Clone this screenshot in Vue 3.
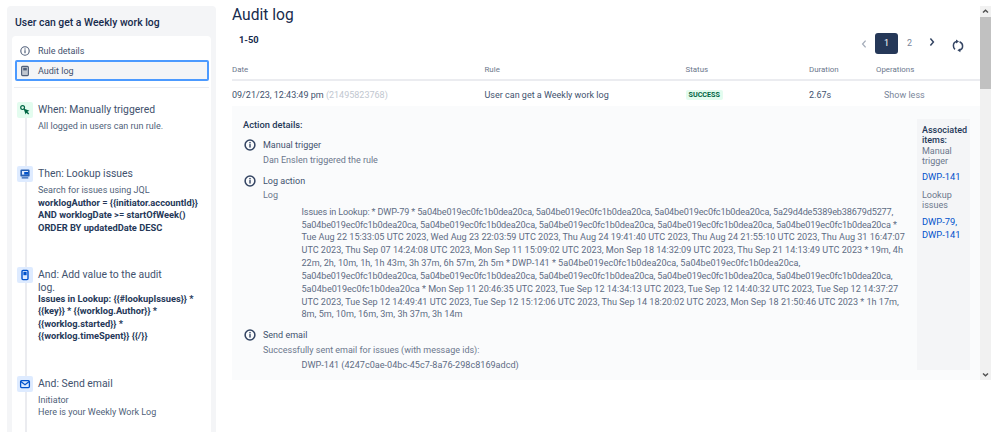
<script setup>
const hexId = '5a04be019ec0fc1b0dea20ca'
const logLines = [
  { text: `Issues in Lookup: * DWP-79 * ${hexId}, ${hexId}, ${hexId}, 5a29d4de5389eb38679d5277,`, kind: 'hex' },
  { text: `${hexId}, ${hexId}, ${hexId}, ${hexId}, ${hexId} *`, kind: 'hex' },
  { text: 'Tue Aug 22 15:33:05 UTC 2023, Wed Aug 23 22:03:59 UTC 2023, Thu Aug 24 19:41:40 UTC 2023, Thu Aug 24 21:55:10 UTC 2023, Thu Aug 31 16:47:07', kind: 'plain' },
  { text: 'UTC 2023, Thu Sep 07 14:24:08 UTC 2023, Mon Sep 11 15:09:02 UTC 2023, Mon Sep 18 14:32:09 UTC 2023, Thu Sep 21 14:13:49 UTC 2023 * 19m, 4h', kind: 'plain' },
  { text: `22m, 2h, 10m, 1h, 1h 43m, 3h 37m, 6h 57m, 2h 5m * DWP-141 * ${hexId}, ${hexId},`, kind: 'plain' },
  { text: `${hexId}, ${hexId}, ${hexId}, ${hexId}, ${hexId},`, kind: 'hex' },
  { text: `${hexId} * Mon Sep 11 20:46:35 UTC 2023, Tue Sep 12 14:34:13 UTC 2023, Tue Sep 12 14:40:32 UTC 2023, Tue Sep 12 14:37:27`, kind: 'plain' },
  { text: 'UTC 2023, Tue Sep 12 14:49:41 UTC 2023, Tue Sep 12 15:12:06 UTC 2023, Thu Sep 14 18:20:02 UTC 2023, Mon Sep 18 21:50:46 UTC 2023 * 1h 17m,', kind: 'plain' },
  { text: '8m, 5m, 10m, 16m, 3m, 3h 37m, 3h 14m', kind: 'plain' }
]
</script>

<template>
  <div class="page">
    <aside class="sidebar">
      <h2 class="rule-name">User can get a Weekly work log</h2>
      <div class="panel">
        <div class="nav-item">
          <svg class="nav-icon" viewBox="0 0 12 12"><circle cx="6" cy="6" r="4.2" fill="none" stroke="#505f79" stroke-width="1.1"/><rect x="5.4" y="5.2" width="1.2" height="3" fill="#505f79"/><rect x="5.4" y="3.4" width="1.2" height="1.2" fill="#505f79"/></svg>
          <span>Rule details</span>
        </div>
        <div class="nav-item active">
          <svg class="nav-icon" viewBox="0 0 12 12"><rect x="2.6" y="1.4" width="6.8" height="9.2" rx="1" fill="#c1c7d0" stroke="#505f79" stroke-width="1.1"/><rect x="4.2" y="2.8" width="3.6" height="2.6" fill="#505f79"/></svg>
          <span>Audit log</span>
        </div>
        <div class="divider"></div>

        <div class="steps">
          <div class="step step-when">
            <div class="step-icon green">
              <svg viewBox="0 0 16 16" width="16" height="16"><circle cx="5.6" cy="5.6" r="1.9" fill="none" stroke="#006644" stroke-width="1.2"/><path d="M6.6 6.6 L12.4 8.8 L10.4 9.8 L12.2 11.6 L11.2 12.6 L9.4 10.8 L8.6 12.6 Z" fill="#006644"/></svg>
            </div>
            <div class="step-title">When: Manually triggered</div>
            <div class="step-text">All logged in users can run rule.</div>
          </div>
          <div class="step step-then">
            <div class="step-icon blue">
              <svg viewBox="0 0 16 16" width="16" height="16"><rect x="3.4" y="3.6" width="9.2" height="7" rx="1.2" fill="#0747a6" opacity=".85"/><rect x="5" y="5" width="6" height="3.6" fill="#deebff"/><rect x="7.2" y="6" width="3.8" height="2.6" fill="#0052cc"/><rect x="4.6" y="11.2" width="6.8" height="1.4" rx=".5" fill="#0747a6" opacity=".85"/></svg>
            </div>
            <div class="step-title">Then: Lookup issues</div>
            <div class="step-text">Search for issues using JQL</div>
            <div class="step-text bold">worklogAuthor = {{ '{' }}{initiator.accountId}}</div>
            <div class="step-text bold">AND worklogDate &gt;= startOfWeek()</div>
            <div class="step-text bold">ORDER BY updatedDate DESC</div>
          </div>
          <div class="step step-add">
            <div class="step-icon blue">
              <svg viewBox="0 0 16 16" width="16" height="16"><rect x="5" y="3.4" width="6" height="9.2" rx="1" fill="#deebff" stroke="#0052cc" stroke-width="1.4"/><rect x="6.4" y="4.8" width="3.2" height="3.4" fill="#0052cc"/></svg>
            </div>
            <div class="step-title">And: Add value to the audit</div>
            <div class="step-title">log.</div>
            <div class="step-text bold">Issues in Lookup: {{ '{' }}{#lookupIssues}} *</div>
            <div class="step-text bold">{{ '{' }}{key}} * {{ '{' }}{worklog.Author}} *</div>
            <div class="step-text bold">{{ '{' }}{worklog.started}} *</div>
            <div class="step-text bold">{{ '{' }}{worklog.timeSpent}} {{ '{' }}{/}}</div>
          </div>
          <div class="step step-mail">
            <div class="step-icon blue">
              <svg viewBox="0 0 16 16" width="16" height="16"><rect x="3.6" y="4.6" width="8.8" height="7" rx="1" fill="#deebff" stroke="#0052cc" stroke-width="1.3"/><path d="M3.8 5.6 L8 8.8 L12.2 5.6" fill="none" stroke="#0052cc" stroke-width="1.3"/></svg>
            </div>
            <div class="step-title">And: Send email</div>
            <div class="step-text first">Initiator</div>
            <div class="step-text">Here is your Weekly Work Log</div>
          </div>
        </div>
      </div>
    </aside>

    <main class="main">
      <div class="content">
        <h1 class="title">Audit log</h1>
        <div class="toolbar">
          <strong class="range">1-50</strong>
          <div class="pager">
            <svg class="chev" viewBox="0 0 8 12"><path d="M5.6 2.6 L2.6 6 L5.6 9.4" fill="none" stroke="#a5adba" stroke-width="1.3"/></svg>
            <span class="page-btn current">1</span>
            <span class="page-btn">2</span>
            <svg class="chev next" viewBox="0 0 8 12"><path d="M2.4 2.6 L5.4 6 L2.4 9.4" fill="none" stroke="#344563" stroke-width="1.5"/></svg>
            <svg class="refresh" viewBox="0 0 14 14"><path d="M6 2.6 C3.4 2.8 2.4 4.6 2.4 6.8 C2.4 8.4 3 9.6 4 10.4" fill="none" stroke="#344563" stroke-width="1.5"/><path d="M5 .6 L8 2.6 L5 4.6Z" fill="#344563"/><path d="M8.6 2.8 C10.4 3.6 11.6 5 11.6 7 C11.6 9.2 10.6 10.8 8.4 11.2" fill="none" stroke="#344563" stroke-width="1.5"/><path d="M9.4 9.2 L6.4 11.2 L9.4 13.2Z" fill="#344563"/></svg>
          </div>
        </div>

        <div class="row head">
          <span class="c-date">Date</span>
          <span class="c-rule">Rule</span>
          <span class="c-status">Status</span>
          <span class="c-dur">Duration</span>
          <span class="c-ops">Operations</span>
        </div>
        <div class="row body">
          <span class="c-date">09/21/23, 12:43:49 pm <span class="muted">(21495823768)</span></span>
          <span class="c-rule">User can get a Weekly work log</span>
          <span class="c-status"><span class="lozenge">SUCCESS</span></span>
          <span class="c-dur">2.67s</span>
          <span class="c-ops less">Show less</span>
        </div>

        <div class="details">
          <div class="actions">
            <h3 class="details-title">Action details:</h3>
            <section class="action a1">
              <svg class="info" viewBox="0 0 12 12"><circle cx="6" cy="6" r="4.2" fill="none" stroke="#344563" stroke-width="1.3"/><rect x="5.4" y="5.2" width="1.2" height="3" fill="#344563"/><rect x="5.4" y="3.4" width="1.2" height="1.2" fill="#344563"/></svg>
              <div class="a-body">
                <div class="a-name">Manual trigger</div>
                <div class="a-sub">Dan Enslen triggered the rule</div>
              </div>
            </section>
            <section class="action a2">
              <svg class="info" viewBox="0 0 12 12"><circle cx="6" cy="6" r="4.2" fill="none" stroke="#344563" stroke-width="1.3"/><rect x="5.4" y="5.2" width="1.2" height="3" fill="#344563"/><rect x="5.4" y="3.4" width="1.2" height="1.2" fill="#344563"/></svg>
              <div class="a-body">
                <div class="a-name">Log action</div>
                <div class="a-sub">Log</div>
                <div class="log">
                  <div v-for="l in logLines" :key="l.text" :class="['log-line', l.kind]">{{ l.text }}</div>
                </div>
              </div>
            </section>
            <section class="action a3">
              <svg class="info" viewBox="0 0 12 12"><circle cx="6" cy="6" r="4.2" fill="none" stroke="#344563" stroke-width="1.3"/><rect x="5.4" y="5.2" width="1.2" height="3" fill="#344563"/><rect x="5.4" y="3.4" width="1.2" height="1.2" fill="#344563"/></svg>
              <div class="a-body">
                <div class="a-name">Send email</div>
                <div class="a-sub">Successfully sent email for issues (with message ids):</div>
                <div class="log email"><div class="log-line">DWP-141 (4247c0ae-04bc-45c7-8a76-298c8169adcd)</div></div>
              </div>
            </section>
          </div>
          <aside class="assoc">
            <div class="assoc-title">Associated</div>
            <div class="assoc-title">items:</div>
            <div class="assoc-label">Manual</div>
            <div class="assoc-label">trigger</div>
            <div class="assoc-link l1">DWP-141</div>
            <div class="assoc-label l2">Lookup</div>
            <div class="assoc-label">issues</div>
            <div class="assoc-link l3">DWP-79,</div>
            <div class="assoc-link l4">DWP-141</div>
          </aside>
        </div>
      </div>

      <div class="scrollbar">
        <div class="sb-btn"><svg viewBox="0 0 11 11"><path d="M3 6.6 L5.5 4.2 L8 6.6" fill="none" stroke="#505050" stroke-width="1.4"/></svg></div>
        <div class="sb-thumb"></div>
        <div class="sb-track"></div>
        <div class="sb-btn"><svg viewBox="0 0 11 11"><path d="M3 4.4 L5.5 6.8 L8 4.4" fill="none" stroke="#505050" stroke-width="1.4"/></svg></div>
      </div>
    </main>
  </div>
</template>

<style scoped>
.page {
  display: flex;
  width: 999px;
  height: 432px;
  overflow: hidden;
  background: #fff;
  font-family: Roboto, "Noto Sans", sans-serif;
  font-size: 9px;
  color: #505f79;
}
.sidebar {
  width: 209px;
  margin: 6px 0 0 7px;
  padding: 0 5px;
  box-sizing: border-box;
  background: #f4f5f7;
  border-radius: 4px 4px 0 0;
  flex: none;
}
.rule-name {
  margin: 0;
  padding: 9px 3px 0;
  height: 30px;
  box-sizing: border-box;
  font-size: 10.4px;
  line-height: 15px;
  font-weight: 500;
  color: #172b4d;
  white-space: nowrap;
}
.panel {
  background: #fff;
  border-radius: 4px 4px 0 0;
  padding: 4px 2px 0;
  height: 396px;
  box-sizing: border-box;
}
.nav-item {
  display: flex;
  align-items: center;
  height: 22px;
  padding-left: 3px;
  border: 2px solid transparent;
  box-sizing: border-box;
  gap: 7px;
  color: #42526e;
  font-size: 9px;
}
.nav-item.active {
  height: 21px;
  width: 194px;
  margin-left: 1px;
  padding-left: 2px;
  margin-top: -2px;
  background: #f4f5f7;
  border-color: #4c9aff;
  border-radius: 2px;
}
.nav-icon { width: 12px; height: 12px; flex: none; }
.divider {
  height: 1px;
  background: #ebecf0;
  margin: 6px 0 0 0;
  width: 195px;
}
.steps {
  position: relative;
  padding-left: 22px;
  margin-left: 2px;
  margin-top: 14px;
}
.steps::before {
  content: "";
  position: absolute;
  left: 9px;
  top: 0;
  bottom: -40px;
  width: 2px;
  background: #ebecf0;
}
.step { position: relative; }
.step-then { margin-top: 34px; }
.step-add { margin-top: 33px; }
.step-mail { margin-top: 33px; }
.step-icon {
  position: absolute;
  left: -21px;
  top: 0;
  width: 16px;
  height: 16px;
  border-radius: 2px;
}
.step-icon svg { display: block; }
.green { background: #e3fcef; }
.blue { background: #deebff; }
.step-title {
  font-size: 10.4px;
  line-height: 13px;
  color: #42526e;
  white-space: nowrap;
  padding-top: 1px;
  margin-bottom: -1px;
}
.step-text {
  font-size: 9px;
  line-height: 12.4px;
  color: #505f79;
  white-space: nowrap;
}
.step-title + .step-text { margin-top: 5px; }
.step-text.bold {
  font-size: 9.3px;
  font-weight: 700;
  color: #253858;
}
.step-add .step-title + .step-title { margin-top: 0; }
.step-add .step-title + .bold { margin-top: 0; }

.main {
  flex: 1;
  display: flex;
  min-width: 0;
  margin-left: 16px;
  height: 380px;
  margin-top: 0;
}
.content { width: 748px; flex: none; }
.title {
  margin: 0;
  font-size: 15.6px;
  line-height: 24px;
  padding-top: 3px;
  font-weight: 400;
  color: #172b4d;
}
.toolbar {
  display: flex;
  align-items: flex-start;
  justify-content: space-between;
  height: 33px;
  padding-top: 6px;
  box-sizing: border-box;
}
.range {
  margin-left: 7px;
  margin-top: 1px;
  font-size: 9.3px;
  line-height: 12px;
  font-weight: 700;
  color: #172b4d;
}
.pager {
  display: flex;
  align-items: center;
  height: 21px;
  margin-right: 15px;
}
.chev { width: 8px; height: 12px; margin-right: 7px; }
.chev.next { margin-left: 7px; margin-right: 0; margin-top: -3px; }
.page-btn {
  width: 23px;
  height: 21px;
  line-height: 21px;
  text-align: center;
  border-radius: 3px;
  color: #7a869a;
  font-size: 9px;
}
.page-btn.current { background: #253858; color: #fff; }
.refresh { width: 14px; height: 14px; margin-left: 15px; margin-top: 4px; }

.row { display: flex; align-items: center; white-space: nowrap; }
.row > span { flex: none; }
.c-date { width: 252.5px; }
.c-rule { width: 201px; }
.c-status { width: 123.5px; }
.c-dur { width: 67px; }
.row.head {
  height: 19px;
  padding-top: 1px;
  border-bottom: 2px solid #ebecf0;
  box-sizing: content-box;
  font-size: 7.9px;
  color: #6b778c;
  margin-top: -1px;
}
.row.body {
  height: 23px;
  padding-top: 2px;
  color: #42526e;
  font-size: 9px;
}
.muted { color: #c1c7d0; }
.lozenge {
  display: inline-block;
  background: #e3fcef;
  color: #006644;
  font-weight: 700;
  font-size: 7.2px;
  line-height: 10px;
  padding: 0 3px;
  border-radius: 2px;
}
.less { padding-left: 8px; color: #7a869a; }

.details {
  display: flex;
  height: 274px;
  background: #fafbfc;
  padding-top: 13px;
  box-sizing: border-box;
}
.actions { width: 685px; flex: none; padding-left: 11px; box-sizing: border-box; }
.details-title {
  margin: 0;
  font-size: 9.3px;
  line-height: 12px;
  font-weight: 500;
  color: #253858;
}
.action { display: flex; }
.a1 { margin-top: 8px; }
.a2 { margin-top: 8px; }
.a3 { margin-top: 8px; }
.info { width: 14px; height: 14px; flex: none; margin: -1px 6px 0 0; }
.a-name { font-size: 9px; line-height: 13px; color: #42526e; }
.a-sub { font-size: 9px; line-height: 14px; color: #6b778c; margin-top: 0.5px; white-space: nowrap; }
.log { margin: 3.7px 0 0 38.5px; white-space: nowrap; font-size: 9.1px; line-height: 12.85px; color: #5e6c84; }
.log-line.hex { letter-spacing: -0.14px; }
.log.email { margin-top: 2px; }
.assoc {
  width: 52.5px;
  height: 251px;
  background: #f4f5f7;
  padding: 6px 0 0 5px;
  box-sizing: border-box;
  flex: none;
  margin-top: 0;
  white-space: nowrap;
}
.assoc-title { font-weight: 500; color: #253858; line-height: 10.4px; font-size: 9px; }
.assoc-label { color: #6b778c; line-height: 10.4px; font-size: 9px; }
.assoc-link { color: #0052cc; line-height: 13px; font-size: 9.3px; }
.l1 { margin-top: 3.5px; }
.l2 { margin-top: 6.5px; }
.l3 { margin-top: 4.5px; }
.scrollbar {
  width: 11px;
  flex: none;
  display: flex;
  flex-direction: column;
  margin-top: 6px;
  background: #f1f1f1;
}
.sb-btn { height: 11px; flex: none; }
.sb-btn svg { display: block; width: 11px; height: 11px; }
.sb-thumb { height: 72px; background: #c1c1c1; flex: none; }
.sb-track { flex: 1; }
</style>
